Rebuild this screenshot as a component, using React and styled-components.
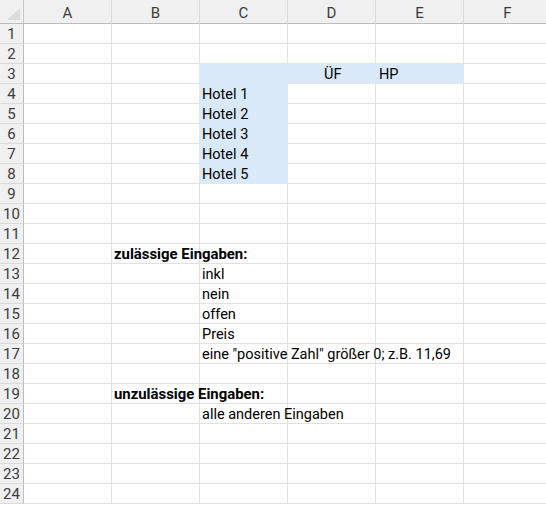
import styled, { createGlobalStyle } from "styled-components";

const GlobalStyle = createGlobalStyle`
  html, body {
    margin: 0;
    background: #ffffff;
    overflow: hidden;
  }
`;

const FILL = "#dae9f8";
const GRID = "#e1e1e1";

const Sheet = styled.div`
  display: grid;
  grid-template-columns: 24px repeat(6, 88px);
  grid-template-rows: 24px;
  grid-auto-rows: 20px;
  width: 546px;
  height: 505px;
  overflow: hidden;
  font-family: "Roboto", "Liberation Sans", sans-serif;
  font-size: 15px;
  color: #000;
`;

const Corner = styled.div`
  position: relative;
  background: #f0f0f0;
  border-right: 1px solid #c6c6c6;
  border-bottom: 1px solid #bdbdbd;
  &::after {
    content: "";
    position: absolute;
    left: 7px;
    top: 8px;
    width: 13px;
    height: 12px;
    background: #dcdcdc;
    clip-path: polygon(100% 0, 100% 100%, 0 100%);
  }
`;

const ColHead = styled.div`
  display: flex;
  align-items: center;
  justify-content: center;
  background: #f0f0f0;
  border-right: 1px solid #dadada;
  border-bottom: 1px solid #bdbdbd;
  color: #3c3c3c;
  padding-top: 2px;
`;

const RowHead = styled.div`
  display: flex;
  align-items: center;
  justify-content: center;
  background: #f0f0f0;
  border-right: 1px solid #bdbdbd;
  border-bottom: 1px solid #dadada;
  color: #3c3c3c;
  padding-top: 1px;
`;

const Cell = styled.div`
  position: relative;
  display: flex;
  align-items: flex-end;
  padding: 0 0 0 ${(p) => p.$pad || 2}px;
  border-right: 1px solid ${(p) => (p.$fill ? FILL : GRID)};
  border-bottom: 1px solid ${(p) => (p.$fill ? FILL : GRID)};
  background: ${(p) => (p.$fill ? FILL : "transparent")};
  box-shadow: ${(p) => (p.$fill ? `-1px -1px 0 0 ${FILL}` : "none")};
  font-size: ${(p) => (p.$bold ? 14.9 : 14.5)}px;
  font-weight: ${(p) => (p.$bold ? 700 : 400)};
  white-space: nowrap;
  overflow: visible;
  line-height: 17px;
  z-index: ${(p) => (p.$text ? 1 : 0)};
`;

const COLS = ["A", "B", "C", "D", "E", "F"];

const cells = {
  "D3": { text: "ÜF", pad: 36, fill: true },
  "E3": { text: "HP", pad: 3, fill: true },
  "C3": { fill: true },
  "C4": { text: "Hotel 1", fill: true },
  "C5": { text: "Hotel 2", fill: true },
  "C6": { text: "Hotel 3", fill: true },
  "C7": { text: "Hotel 4", fill: true },
  "C8": { text: "Hotel 5", fill: true },
  "B12": { text: "zulässige Eingaben:", bold: true },
  "C13": { text: "inkl" },
  "C14": { text: "nein" },
  "C15": { text: "offen" },
  "C16": { text: "Preis" },
  "C17": { text: 'eine "positive Zahl" größer 0; z.B. 11,69' },
  "B19": { text: "unzulässige Eingaben:", bold: true },
  "C20": { text: "alle anderen Eingaben" },
};

export default function App() {
  const rows = Array.from({ length: 24 }, (_, i) => i + 1);
  return (
    <>
      <GlobalStyle />
      <Sheet>
        <Corner />
        {COLS.map((c) => (
          <ColHead key={c}>{c}</ColHead>
        ))}
        {rows.map((r) => [
          <RowHead key={`h${r}`}>{r}</RowHead>,
          ...COLS.map((c) => {
            const d = cells[`${c}${r}`] || {};
            return (
              <Cell
                key={`${c}${r}`}
                $fill={d.fill}
                $bold={d.bold}
                $pad={d.pad}
                $text={!!d.text}
              >
                {d.text}
              </Cell>
            );
          }),
        ])}
      </Sheet>
    </>
  );
}
